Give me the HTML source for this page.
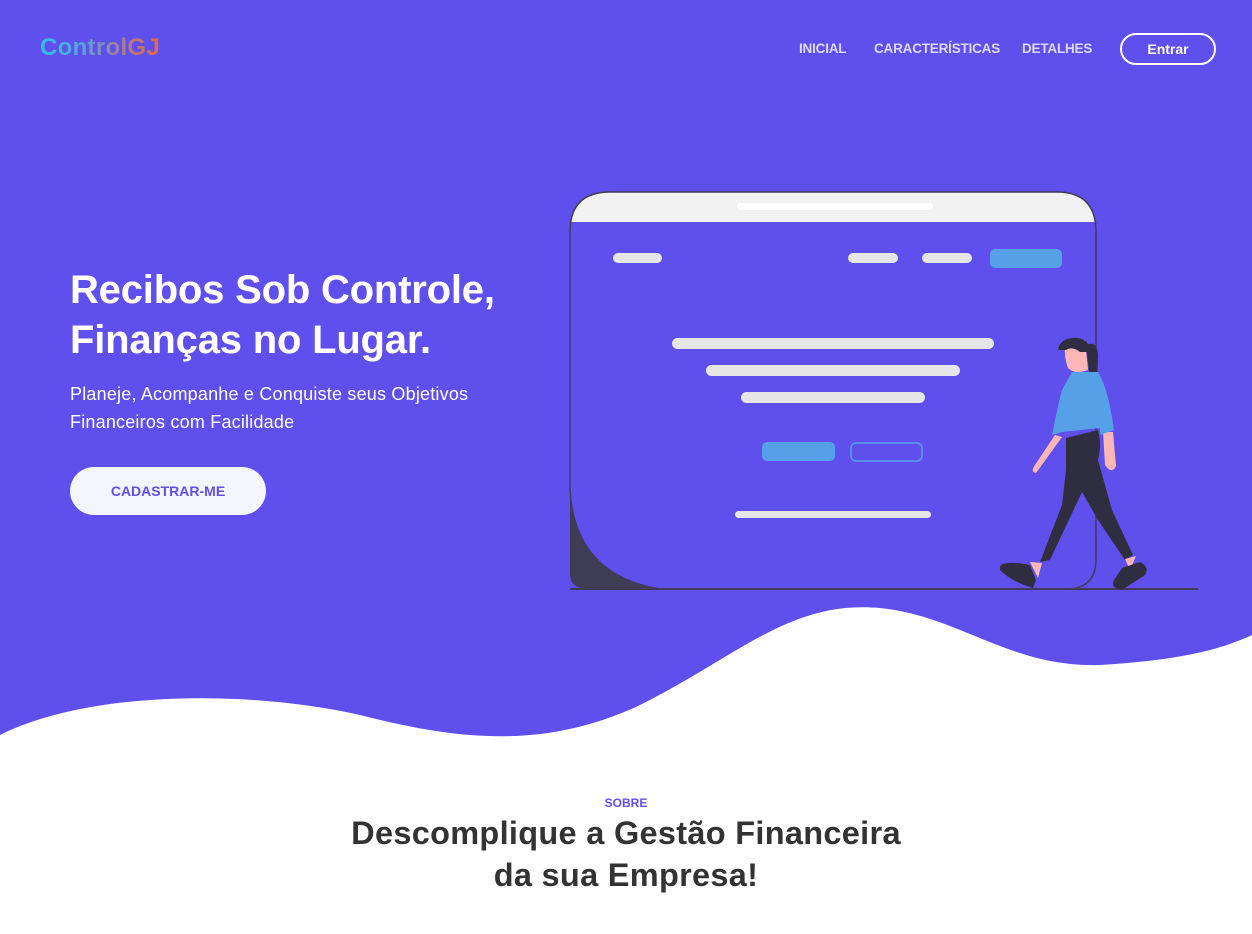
<!DOCTYPE html>
<html><head><meta charset="utf-8"><style>
*{margin:0;padding:0;box-sizing:border-box}
body{width:1252px;height:934px;overflow:hidden;background:#fff;font-family:"Liberation Sans",sans-serif;position:relative}
.hero{position:absolute;left:0;top:0;width:1252px;height:760px;background:#5f4fed}
.logo{position:absolute;left:40px;top:34px;font-size:24px;font-weight:bold;letter-spacing:0.3px;background:linear-gradient(90deg,#2fc3e6,#5aa3d8 35%,#a07f9e 65%,#e8693a);-webkit-background-clip:text;background-clip:text;color:transparent}
.nav{position:absolute;top:41px;font-size:13.5px;font-weight:bold;color:#ddd9fb;letter-spacing:-0.2px}
.btn{position:absolute;left:1120px;top:33px;width:96px;height:32px;border:2px solid #fff;border-radius:16px;color:#fff;font-weight:bold;font-size:14px;text-align:center;line-height:28px}
h1{position:absolute;left:70px;top:265px;font-size:40px;line-height:50px;color:#fff;font-weight:bold;letter-spacing:-0.2px}
.sub{position:absolute;left:70px;top:380px;font-size:18px;line-height:28px;color:#fff;letter-spacing:0.2px}
.cad{position:absolute;left:70px;top:467px;width:196px;height:48px;border-radius:24px;background:#f4f6fe;color:#5f4fed;font-weight:bold;font-size:14px;text-align:center;line-height:48px}
.sobre{position:absolute;top:796px;width:1252px;text-align:center;font-size:12px;font-weight:bold;color:#5f4fed}
h2{position:absolute;top:812px;width:1252px;text-align:center;font-size:32.5px;line-height:42px;color:#333;font-weight:bold;letter-spacing:0.3px}
</style></head><body>
<div class="hero"></div>
<svg style="position:absolute;left:0;top:0" width="1252" height="934">
<path d="M0,735 C90,690 250,690 360,715 C450,738 540,752 640,705 C740,655 790,600 880,608 C960,616 1010,668 1100,665 C1180,660 1220,650 1252,635 L1252,934 L0,934 Z" fill="#fff"/>
<path d="M570,222 L570,232 Q570,192 610,192 L1057,192 Q1096,192 1096,232 L1096,222 Z" fill="#f2f2f2"/>
<path d="M570,222 L570,575 Q570,589 590,589 L660,589 Q575,575 570,490 Z" fill="#3f3d56"/>
<path d="M610,192 L1057,192 Q1096,192 1096,232 L1096,559 Q1096,589 1066,589 L660,589 Q575,575 570,490 L570,232 Q570,192 610,192Z" fill="none" stroke="#3f3d56" stroke-width="1.5"/>
<line x1="570" y1="589" x2="1198" y2="589" stroke="#3f3d56" stroke-width="2"/>
<rect x="737" y="203" width="196" height="7" rx="3.5" fill="#fff"/>
<g fill="#e6e6e6">
<rect x="613" y="253" width="49" height="10" rx="5"/><rect x="848" y="253" width="50" height="10" rx="5"/><rect x="922" y="253" width="50" height="10" rx="5"/>
<rect x="672" y="338" width="322" height="11" rx="5.5"/><rect x="706" y="365" width="254" height="11" rx="5.5"/><rect x="741" y="392" width="184" height="11" rx="5.5"/>
<rect x="735" y="511" width="196" height="7" rx="3.5"/></g>
<rect x="990" y="249" width="72" height="19" rx="5" fill="#56a0e8"/>
<rect x="762" y="442" width="73" height="19" rx="5" fill="#56a0e8"/>
<rect x="851" y="443" width="71" height="18" rx="5" fill="none" stroke="#56a0e8" stroke-width="1.5"/>
<path d="M1086,345 Q1097,340 1098,355 L1097,385 L1090,380Z" fill="#2f2e41"/>
<path d="M1065,345 Q1070,338 1085,340 L1088,370 Q1075,375 1068,368 Q1064,358 1065,345Z" fill="#ffb6b6"/>
<path d="M1058,350 Q1060,337 1078,338 Q1090,340 1090,352 L1080,352 Q1072,346 1066,350Z" fill="#2f2e41"/>
<path d="M1055,435 L1035,465 Q1030,472 1036,473 L1062,437Z M1103,432 L1105,465 Q1112,475 1116,466 L1113,432Z" fill="#ffb6b6"/>
<path d="M1072,372 L1098,372 Q1108,388 1114,430 L1100,435 L1100,428 L1062,432 L1052,435 Q1058,405 1062,390Z" fill="#56a0e8"/>
<path d="M1066,438 L1098,430 Q1102,445 1098,460 L1112,510 L1133,555 L1125,560 L1098,520 L1082,492 L1050,560 L1040,562 L1062,505 L1066,470Z" fill="#2f2e41"/>
<path d="M1030,562 L1042,563 L1038,578Z M1125,559 L1136,556 L1130,570Z" fill="#ffb6b6"/>
<path d="M1000,566 Q1005,560 1030,565 L1036,580 L1033,588 Q1012,582 1000,570Z M1122,568 L1140,562 Q1150,567 1145,575 L1122,590 Q1110,588 1114,580Z" fill="#2f2e41"/>
</svg>
<div class="logo">ControlGJ</div>
<div class="nav" style="left:799px">INICIAL</div>
<div class="nav" style="left:874px">CARACTERÍSTICAS</div>
<div class="nav" style="left:1022px">DETALHES</div>
<div class="btn">Entrar</div>
<h1>Recibos Sob Controle,<br>Finanças no Lugar.</h1>
<div class="sub">Planeje, Acompanhe e Conquiste seus Objetivos<br>Financeiros com Facilidade</div>
<div class="cad">CADASTRAR-ME</div>
<div class="sobre">SOBRE</div>
<h2>Descomplique a Gestão Financeira<br>da sua Empresa!</h2>
</body></html>
